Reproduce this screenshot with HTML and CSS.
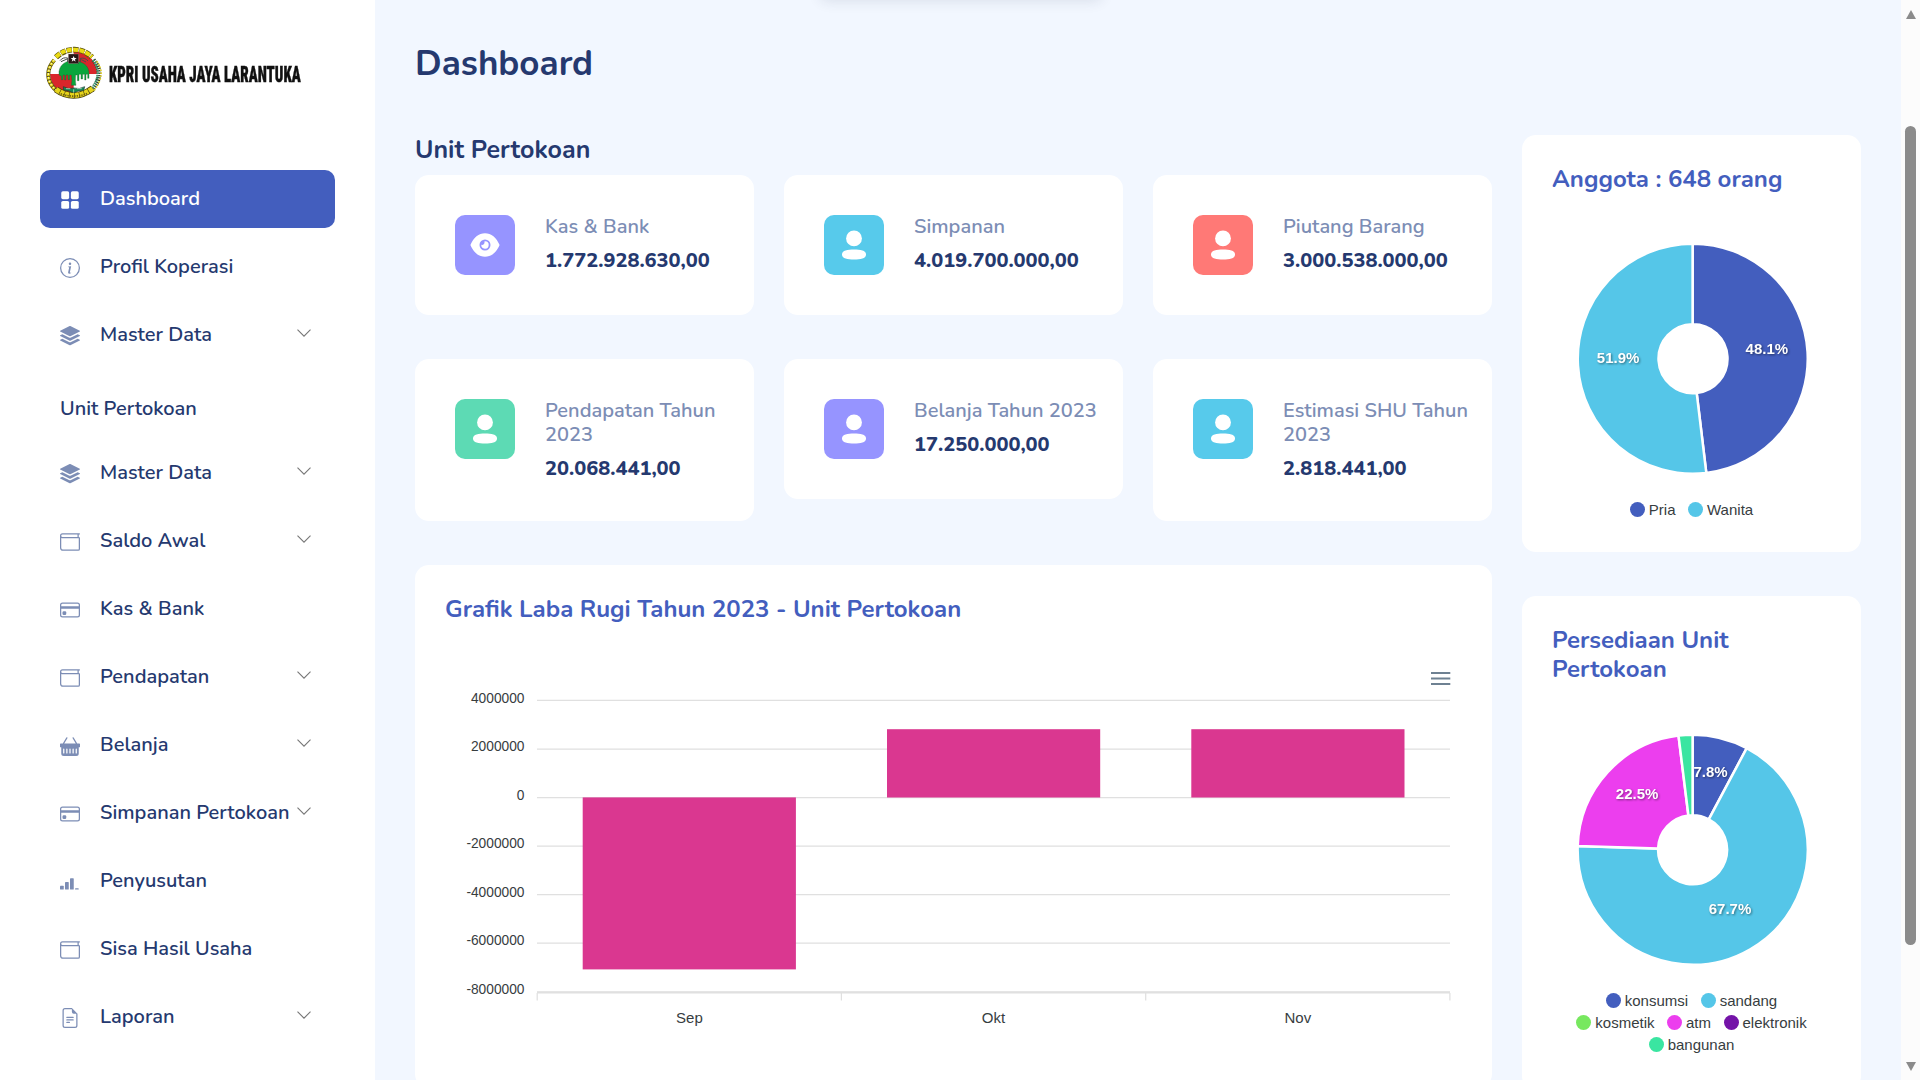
FILE: index.html
```html
<!DOCTYPE html>
<html lang="id">
<head>
<meta charset="utf-8">
<title>Dashboard - KPRI Usaha Jaya Larantuka</title>
<link rel="stylesheet" href="styles.css">
</head>
<body>
<svg class="defs" aria-hidden="true">
  <symbol id="i-grid" viewBox="0 0 16 16"><rect x="1" y="1" width="6.300" height="6.300" rx="1.300"/><rect x="8.700" y="1" width="6.300" height="6.300" rx="1.300"/><rect x="1" y="8.700" width="6.300" height="6.300" rx="1.300"/><rect x="8.700" y="8.700" width="6.300" height="6.300" rx="1.300"/></symbol>
  <symbol id="i-info" viewBox="0 0 16 16"><path d="M8 15A7 7 0 1 1 8 1a7 7 0 0 1 0 14zm0 1A8 8 0 1 0 8 0a8 8 0 0 0 0 16z"/><path d="m8.93 6.588-2.29.287-.082.38.45.083c.294.07.352.176.288.469l-.738 3.468c-.194.897.105 1.319.808 1.319.545 0 1.178-.252 1.465-.598l.088-.416c-.2.176-.492.246-.686.246-.275 0-.375-.193-.304-.533L8.93 6.588zM9 4.5a1 1 0 1 1-2 0 1 1 0 0 1 2 0z"/></symbol>
  <symbol id="i-stack" viewBox="0 0 16 16"><path d="m14.12 10.163 1.715.858c.22.11.22.424 0 .534L8.267 15.34a.598.598 0 0 1-.534 0L.165 11.555a.299.299 0 0 1 0-.534l1.716-.858 5.317 2.659c.505.252 1.1.252 1.604 0l5.317-2.66zM7.733.063a.598.598 0 0 1 .534 0l7.568 3.784a.3.3 0 0 1 0 .535L8.267 8.165a.598.598 0 0 1-.534 0L.165 4.382a.299.299 0 0 1 0-.535L7.733.063z"/><path d="m14.12 6.576 1.715.858c.22.11.22.424 0 .534l-7.568 3.784a.598.598 0 0 1-.534 0L.165 7.968a.299.299 0 0 1 0-.534l1.716-.858 5.317 2.659c.505.252 1.1.252 1.604 0l5.317-2.659z"/></symbol>
  <symbol id="i-wallet" viewBox="0 0 16 16"><path d="M0 3a2 2 0 0 1 2-2h13.5a.5.5 0 0 1 0 1H15v2a1 1 0 0 1 1 1v8.5a1.5 1.5 0 0 1-1.5 1.5h-12A2.5 2.5 0 0 1 0 12.5V3zm1 1.732V12.5A1.5 1.5 0 0 0 2.5 14h12a.5.5 0 0 0 .5-.5V5H2a1.99 1.99 0 0 1-1-.268zM1 3a1 1 0 0 0 1 1h12V2H2a1 1 0 0 0-1 1z"/></symbol>
  <symbol id="i-card" viewBox="0 0 16 16"><path d="M0 4a2 2 0 0 1 2-2h12a2 2 0 0 1 2 2v8a2 2 0 0 1-2 2H2a2 2 0 0 1-2-2V4zm2-1a1 1 0 0 0-1 1v1h14V4a1 1 0 0 0-1-1H2zm13 4H1v5a1 1 0 0 0 1 1h12a1 1 0 0 0 1-1V7z"/><path d="M2 10a1 1 0 0 1 1-1h1a1 1 0 0 1 1 1v1a1 1 0 0 1-1 1H3a1 1 0 0 1-1-1v-1z"/></symbol>
  <symbol id="i-basket" viewBox="0 0 16 16"><path d="M5.071 1.243a.5.5 0 0 1 .858.514L3.383 6h9.234L10.07 1.757a.5.5 0 1 1 .858-.514L13.783 6H15.5a.5.5 0 0 1 .5.5v2a.5.5 0 0 1-.5.5H15v5a2 2 0 0 1-2 2H3a2 2 0 0 1-2-2V9H.5a.5.5 0 0 1-.5-.5v-2A.5.5 0 0 1 .5 6h1.717L5.07 1.243zM3.5 10.5a.5.5 0 1 0-1 0v3a.5.5 0 0 0 1 0v-3zm2.5 0a.5.5 0 1 0-1 0v3a.5.5 0 0 0 1 0v-3zm2.5 0a.5.5 0 1 0-1 0v3a.5.5 0 0 0 1 0v-3zm2.5 0a.5.5 0 1 0-1 0v3a.5.5 0 0 0 1 0v-3zm2.5 0a.5.5 0 1 0-1 0v3a.5.5 0 0 0 1 0v-3z"/></symbol>
  <symbol id="i-bars" viewBox="0 0 16 16"><rect x="0" y="11" width="3" height="3" rx=".5"/><rect x="4" y="8" width="3" height="6" rx=".5"/><rect x="8" y="5" width="3" height="9" rx=".5"/><rect x="12" y="13" width="3" height="1" rx=".5"/></symbol>
  <symbol id="i-file" viewBox="0 0 16 16"><path d="M4 0h5.5L14 4.5V14a2 2 0 0 1-2 2H4a2 2 0 0 1-2-2V2a2 2 0 0 1 2-2zm0 1a1 1 0 0 0-1 1v12a1 1 0 0 0 1 1h8a1 1 0 0 0 1-1V4.500h-2A1.500 1.500 0 0 1 9.500 3V1H4z"/><path d="M5 7.500a.5.5 0 0 1 .5-.5h5a.5.5 0 0 1 0 1h-5a.5.5 0 0 1-.5-.5zm0 2a.5.5 0 0 1 .5-.5h5a.5.5 0 0 1 0 1h-5a.5.5 0 0 1-.5-.5zm0 2a.5.5 0 0 1 .5-.5h2a.5.5 0 0 1 0 1h-2a.5.5 0 0 1-.5-.5z"/></symbol>
  <symbol id="i-user" viewBox="0 0 60 60"><circle cx="30" cy="23.400" r="7.900"/><path d="M30 34.600c6.500 0 12 .8 12 5s-5.500 5-12 5-12-.9-12-5 5.500-5 12-5z"/></symbol>
  <symbol id="i-eye" viewBox="0 0 60 60"><path fill-rule="evenodd" d="M15.400 30C18.500 22.600 23.800 18.200 30 18.200S41.500 22.600 44.600 30C41.500 37.400 36.200 41.800 30 41.800S18.500 37.400 15.400 30zM30 24.500a5.500 5.500 0 1 0 0 11 5.500 5.500 0 1 0 0-11z"/><path d="M30 26.300a3.700 3.700 0 1 1-3.700 3.500c1.600.6 3.900-1 3.100-3.400z"/></symbol>
  <symbol id="i-chevron" viewBox="0 0 14 8"><path d="M.5.7 7 7.200 13.500.7" fill="none" stroke="currentColor" stroke-width="1.100"/></symbol>
</svg>

<div class="app">
  <aside class="sidebar">
    <div class="brand">
      <svg class="emblem" viewBox="132 135 180 165">
        <ellipse cx="221" cy="220" rx="73" ry="68" fill="#fff"/>
        <path d="M221 222V153A72 68 0 0 1 292 222z" fill="#d9262b"/>
        <path d="M221 222V287A72 66 0 0 1 150 222z" fill="#d9262b"/>
        <path d="M163 180A71 67 0 0 0 147 240 73 68 0 0 0 170 272" fill="none" stroke="#4a4210" stroke-width="12"/>
        <path d="M163 180A71 67 0 0 0 147 240 73 68 0 0 0 170 272" fill="none" stroke="#e8d818" stroke-width="9" stroke-dasharray="8 3"/>
        <path d="M163 180A71 67 0 0 0 147 240 73 68 0 0 0 170 272" fill="none" stroke="#fff" stroke-width="3" stroke-dasharray="5 6"/>
        <path d="M168 172Q190 150 221 149T276 172" fill="none" stroke="#5e5410" stroke-width="17" stroke-dasharray="16 3"/>
        <path d="M168 171Q190 149 221 149T276 171" fill="none" stroke="#eadb14" stroke-width="12" stroke-dasharray="15 4"/>
        <path d="M280 180Q318 222 272 274" fill="none" stroke="#37442a" stroke-width="14" stroke-dasharray="4 3"/>
        <path d="M279 180Q310 222 272 272" fill="none" stroke="#3d9b76" stroke-width="7" stroke-dasharray="5 3"/>
        <path d="M290 184Q320 222 282 272" fill="none" stroke="#e4d530" stroke-width="5" stroke-dasharray="5 4"/>
        <path d="M168 268Q192 286 221 286T278 265" fill="none" stroke="#4c430c" stroke-width="20"/>
        <path d="M168 268Q192 286 221 286T278 265" fill="none" stroke="#e6d41c" stroke-width="15" stroke-dasharray="13 2"/>
        <path d="M182 281Q221 296 264 280" fill="none" stroke="#6d5f12" stroke-width="5" stroke-dasharray="4 3"/>
        <path d="M177 225C174 194 198 181 221 182s49 12 46 43v10h-4v-12h-5v17h-4v-17h-6v14h-5v-14h-6v19h-5v-17h-5q-2 20 1 31h-14q3-12 0-31h-5v14h-5v-14h-6v15h-4v-15h-5v14h-5v-11z" fill="#0aa53c" stroke="#264b2c" stroke-width="1"/>
        <path d="M190 260q15 9 31 4 17 5 33-4l-3 11-14 1-12 5h-8l-13-5-13-2z" fill="#138b54" stroke="#173d30" stroke-width="2"/>
        <path d="M198 266h13m20 0h14m-24 2v10" stroke="#d8eee0" stroke-width="2"/>
        <path d="M180 182q8-11 23-8v12m61-3q-8-11-23-8v12M183 185l18-8m43 2 14 7" fill="none" stroke="#4b4b48" stroke-width="3"/>
        <rect x="205" y="162" width="31" height="29" fill="#271716" stroke="#b9aaa6"/>
        <path d="m221 168 2.600 6h6.400l-5.200 4.400 2 6.600-5.800-4-5.800 4 2-6.600-5.200-4.400h6.400z" fill="#fff"/>
      </svg>
      <span class="brand-name">KPRI USAHA JAYA LARANTUKA</span>
    </div>
    <nav class="menu">
      <a class="item active"><svg class="ico"><use href="#i-grid"/></svg><span>Dashboard</span></a>
      <a class="item"><svg class="ico"><use href="#i-info"/></svg><span>Profil Koperasi</span></a>
      <a class="item"><svg class="ico"><use href="#i-stack"/></svg><span>Master Data</span><svg class="chev"><use href="#i-chevron"/></svg></a>
      <div class="menu-title">Unit Pertokoan</div>
      <a class="item"><svg class="ico"><use href="#i-stack"/></svg><span>Master Data</span><svg class="chev"><use href="#i-chevron"/></svg></a>
      <a class="item"><svg class="ico"><use href="#i-wallet"/></svg><span>Saldo Awal</span><svg class="chev"><use href="#i-chevron"/></svg></a>
      <a class="item"><svg class="ico"><use href="#i-card"/></svg><span>Kas &amp; Bank</span></a>
      <a class="item"><svg class="ico"><use href="#i-wallet"/></svg><span>Pendapatan</span><svg class="chev"><use href="#i-chevron"/></svg></a>
      <a class="item"><svg class="ico"><use href="#i-basket"/></svg><span>Belanja</span><svg class="chev"><use href="#i-chevron"/></svg></a>
      <a class="item"><svg class="ico"><use href="#i-card"/></svg><span>Simpanan Pertokoan</span><svg class="chev"><use href="#i-chevron"/></svg></a>
      <a class="item"><svg class="ico"><use href="#i-bars"/></svg><span>Penyusutan</span></a>
      <a class="item"><svg class="ico"><use href="#i-wallet"/></svg><span>Sisa Hasil Usaha</span></a>
      <a class="item"><svg class="ico"><use href="#i-file"/></svg><span>Laporan</span><svg class="chev"><use href="#i-chevron"/></svg></a>
    </nav>
  </aside>

  <main class="main">
    <h3 class="page-title">Dashboard</h3>
    <div class="content">
      <section class="left">
        <h5 class="section-title">Unit Pertokoan</h5>
        <div class="stats">
          <div class="stat"><svg class="badge purple"><use href="#i-eye"/></svg><div class="stat-text"><h6 class="label">Kas &amp; Bank</h6><h6 class="value">1.772.928.630,00</h6></div></div>
          <div class="stat"><svg class="badge blue"><use href="#i-user"/></svg><div class="stat-text"><h6 class="label">Simpanan</h6><h6 class="value">4.019.700.000,00</h6></div></div>
          <div class="stat"><svg class="badge red"><use href="#i-user"/></svg><div class="stat-text"><h6 class="label">Piutang Barang</h6><h6 class="value">3.000.538.000,00</h6></div></div>
          <div class="stat"><svg class="badge green"><use href="#i-user"/></svg><div class="stat-text"><h6 class="label">Pendapatan Tahun 2023</h6><h6 class="value">20.068.441,00</h6></div></div>
          <div class="stat"><svg class="badge purple"><use href="#i-user"/></svg><div class="stat-text"><h6 class="label">Belanja Tahun 2023</h6><h6 class="value">17.250.000,00</h6></div></div>
          <div class="stat"><svg class="badge blue"><use href="#i-user"/></svg><div class="stat-text"><h6 class="label">Estimasi SHU Tahun 2023</h6><h6 class="value">2.818.441,00</h6></div></div>
        </div>
        <div class="card chart-card">
          <h4 class="card-title">Grafik Laba Rugi Tahun 2023 - Unit Pertokoan</h4>
          <svg class="bar-chart" viewBox="445 654 1017 400">
            <g stroke="#6e8192" stroke-width="2"><path d="M1431 673h19.300M1431 678.500h19.300M1431 684h19.300"/></g>
            <g stroke="#e0e0e0" stroke-width="1.250"><path d="M537 700.400h913M537 749h913M537 797.500h913M537 846.100h913M537 894.700h913M537 943.200h913M537 991.800h913"/><path d="M537 992.600h913" stroke-width="1.800"/><path d="M537.200 993v7.500M841.400 993v7.500M1145.700 993v7.500M1449.900 993v7.500"/></g>
            <g fill="#da3790"><rect x="582.700" y="797.400" width="213.200" height="172"/><rect x="887" y="729.200" width="213.200" height="68.300"/><rect x="1191.300" y="729.200" width="213.200" height="68.300"/></g>
            <g class="ylab" text-anchor="end"><text x="524.500" y="702.800">4000000</text><text x="524.500" y="750.800">2000000</text><text x="524.500" y="799.800">0</text><text x="524.500" y="847.800">-2000000</text><text x="524.500" y="896.800">-4000000</text><text x="524.500" y="944.800">-6000000</text><text x="524.500" y="993.800">-8000000</text></g>
            <g class="xlab" text-anchor="middle"><text x="689.400" y="1023">Sep</text><text x="993.500" y="1023">Okt</text><text x="1297.800" y="1023">Nov</text></g>
          </svg>
        </div>
      </section>
      <section class="right">
        <div class="card members">
          <h4 class="card-title">Anggota : 648 orang</h4>
          <svg class="donut" viewBox="-120.600 -120.700 240 240">
            <g stroke="#fff" stroke-width="2.500">
              <path fill="#435ebe" d="M0-115A115 115 0 0 1 13.700 114.200L4.100 34.300A34.500 34.500 0 0 0 0-34.500z"/>
              <path fill="#55c6e8" d="M13.700 114.200A115 115 0 1 1 0-115V-34.500A34.500 34.500 0 1 0 4.100 34.300z"/>
            </g>
            <g class="pct" text-anchor="middle"><text x="74.300" y="-5">48.1%</text><text x="-74.500" y="4">51.9%</text></g>
          </svg>
          <div class="legend"><span><i class="c1"></i>Pria</span><span><i class="c2"></i>Wanita</span></div>
        </div>
        <div class="card stock">
          <h4 class="card-title">Persediaan Unit Pertokoan</h4>
          <svg class="donut" viewBox="-120.600 -120.700 240 240">
            <g stroke="#fff" stroke-width="2.500">
              <path fill="#435ebe" d="M0-115A115 115 0 0 1 54.100-101.500L16.200-30.400A34.500 34.500 0 0 0 0-34.500z"/>
              <path fill="#55c6e8" d="M54.100-101.500A115 115 0 1 1-114.900-3.600L-34.500-1.100A34.500 34.500 0 1 0 16.200-30.400z"/>
              <path fill="#ec3eee" d="M-114.900-3.600A115 115 0 0 1-14.100-114.100L-4.200-34.200A34.500 34.500 0 0 0-34.500-1.100z"/>
              <path fill="#3ae5a1" d="M-14.100-114.100A115 115 0 0 1 0-115V-34.500A34.500 34.500 0 0 0-4.200-34.200z"/>
            </g>
            <g class="pct" text-anchor="middle"><text x="18" y="-73">7.8%</text><text x="-55.500" y="-51">22.5%</text><text x="37.400" y="64">67.7%</text></g>
          </svg>
          <div class="legend"><span><i class="c1"></i>konsumsi</span><span><i class="c2"></i>sandang</span><span><i class="c3"></i>kosmetik</span><span><i class="c4"></i>atm</span><span><i class="c5"></i>elektronik</span><span><i class="c6"></i>bangunan</span></div>
        </div>
      </section>
    </div>
    <div class="popup"></div>
  </main>
  <div class="scrollbar"><b class="up"></b><b class="thumb"></b><b class="down"></b></div>
</div>
</body>
</html>
```
FILE: styles.css
```css
*{box-sizing:border-box}
html,body{height:100%}
body{margin:0;overflow:hidden;background:#f2f7ff;font-family:Nunito,"Nunito Sans",Lato,sans-serif;font-size:20px;line-height:1.5;color:#25396f}
h3,h4,h5,h6{margin:0;line-height:1.2}
.defs{position:absolute;width:0;height:0}
.app{display:flex;height:1080px;overflow:hidden}

.sidebar{flex:none;width:375px;background:#fff;padding:45px 40px 0}
.brand{display:flex;align-items:flex-start;gap:5px;height:60px;margin:0 0 65px 4px}
.emblem{flex:none;width:60px;height:55px}
.brand-name{flex:none;margin-top:15px;font:900 21.500px/30px "Roboto Condensed",Roboto,sans-serif;color:#111;white-space:nowrap;-webkit-text-stroke:.4px #111;transform:scaleX(.692);transform-origin:0 50%}
.menu{display:flex;flex-direction:column;gap:10px}
.item{display:flex;align-items:center;height:58px;padding:0 24.500px 0 20px;border-radius:10px;font-weight:600;white-space:nowrap}
.item span{flex:1;margin-left:20px}
.ico{flex:none;width:20px;height:20px;margin-top:2px;fill:#7c8db5}
.chev{flex:none;width:14px;height:8px;margin-top:-4px;color:#777}
.active{background:#435ebe;color:#fff}
.active .ico{fill:#fff}
.menu-title{height:60px;padding:20px 20px 0;font-weight:600}

.main{position:relative;flex:1;padding:43px 40px 0}
.page-title{font-size:35px;font-weight:700}
.content{display:flex;align-items:flex-start;gap:30px;margin-top:50px}
.left{flex:none;width:1077px}
.section-title{font-size:25px;font-weight:700;margin-bottom:10px}
.stats{display:grid;grid-template-columns:repeat(3,1fr);align-items:start;gap:44px 30px}
.stat{display:flex;gap:30px;padding:40px 20px 40px 40px;background:#fff;border-radius:14px}
.badge{flex:none;width:60px;height:60px;border-radius:10px;fill:#fff}
.stat-text{min-width:0}
.label{font-size:20px;font-weight:600;color:#7c8db5;margin-bottom:10px}
.value{font-size:20px;font-weight:800}
.purple{background:#9694ff}
.blue{background:#57caeb}
.red{background:#ff7976}
.green{background:#5ddab4}

.card{background:#fff;border-radius:14px;padding:30px}
.card-title{font-size:24px;font-weight:700;color:#435ebe}
.chart-card{height:523px;margin-top:44px}
.bar-chart{display:block;width:1017px;height:400px;margin-top:30.200px}
.ylab,.xlab{font-family:"Liberation Sans",Arial,sans-serif;fill:#373d3f}
.ylab{font-size:13.750px}
.xlab{font-size:15px}

.right{flex:none;width:339px;display:flex;flex-direction:column;gap:44px}
.members{height:417px}
.stock{height:494px}
.donut{display:block;width:240px;height:240px;margin:45px auto 0}
.members .donut{margin-top:44.500px}
.stock .donut{margin-top:45.500px}
.pct{font:bold 15px "Liberation Sans",Arial,sans-serif;fill:#fff;filter:drop-shadow(1px 1px 1px rgba(0,0,0,.45))}
.legend{display:flex;flex-wrap:wrap;justify-content:center;column-gap:12.500px;width:250px;margin:20.500px auto 0;font:15px/22px "Liberation Sans",Arial,sans-serif;color:#373d3f}
.legend span{display:flex;align-items:center;gap:4px}
.legend i{width:15px;height:15px;border-radius:50%}
.c1{background:#435ebe}
.c2{background:#55c6e8}
.c3{background:#77e85f}
.c4{background:#ec3eee}
.c5{background:#7413a8}
.c6{background:#3ae5a1}

/* toast parked just above the viewport, only its shadow shows */
.popup{position:absolute;left:445px;top:-41px;width:282px;height:39px;border-radius:8px;box-shadow:0 3px 14px rgba(30,40,70,.12)}

.scrollbar{flex:none;width:19px;display:flex;flex-direction:column;align-items:center;background:#fcfcfc;padding:10px 0 9px}
.scrollbar b{flex:none}
.up,.down{border:5.500px solid transparent}
.up{border-top:0;border-bottom:9px solid #8b8b8b}
.down{border-bottom:0;border-top:9px solid #8b8b8b;margin-top:auto}
.thumb{width:11px;height:819px;margin-top:107px;border-radius:6px;background:#8b8b8b}
```
